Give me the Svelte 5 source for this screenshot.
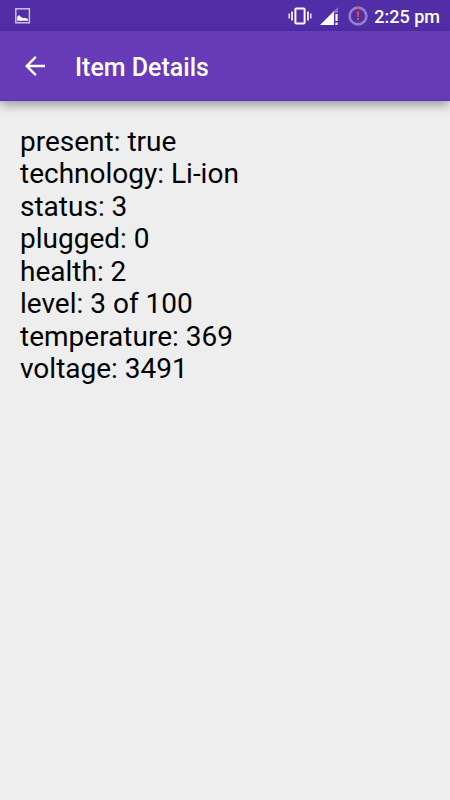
<script lang="ts">
  const battery = [
    { key: 'present', value: 'true' },
    { key: 'technology', value: 'Li-ion' },
    { key: 'status', value: '3' },
    { key: 'plugged', value: '0' },
    { key: 'health', value: '2' },
    { key: 'level', value: '3 of 100' },
    { key: 'temperature', value: '369' },
    { key: 'voltage', value: '3491' },
  ];
</script>

<div class="screen">
  <div class="status-bar">
    <svg class="photo" width="16" height="16" viewBox="0 0 16 16" aria-hidden="true">
      <rect x="0.8" y="0.8" width="13.6" height="14" fill="none" stroke="#d6cbee" stroke-width="1.4" />
      <path d="M2.2 12.8V9l1.2-1.6 1.4.2L6 9.2l1.4.2 1 .9 1.6-.6 1.2.8 1.8.3v2z" fill="#fff" />
    </svg>
    <div class="indicators">
      <svg width="24" height="18" viewBox="0 0 24 18" aria-hidden="true">
        <rect x="7.4" y="1.4" width="9.2" height="15.2" rx="1" fill="none" stroke="#fff" stroke-width="2" />
        <path d="M4 4.5v9M20 4.5v9" stroke="#e4dcf4" stroke-width="2" />
        <path d="M1.2 6.5v5M22.8 6.5v5" stroke="#d0c4ea" stroke-width="1.8" />
      </svg>
      <svg class="signal" width="19" height="18" viewBox="0 0 19 18" aria-hidden="true">
        <path d="M18 0v6h-4v-2z" fill="#8a70c5" />
        <path d="M0 18L14 4v14z" fill="#fff" />
        <path d="M15.4 7h2.2v7h-2.2zM15.4 15.5h2.2V18h-2.2z" fill="#fff" />
      </svg>
      <svg class="ring" width="20" height="20" viewBox="0 0 20 20" aria-hidden="true">
        <circle cx="10" cy="10" r="8.4" fill="none" stroke="#9580ca" stroke-width="2.6" />
        <path d="M9 0h2v3H9z" fill="#f4511e" />
        <path d="M8.9 5.6h2.2l-.3 5.4H9.2zM9 12h2v2H9z" fill="#f4511e" />
      </svg>
      <time>2:25 pm</time>
    </div>
  </div>

  <header>
    <button aria-label="Navigate up">
      <svg width="20" height="20" viewBox="0 0 20 20" aria-hidden="true">
        <path d="M20 8.8v2.4H4.7l7 7L10 20 0 10 10 0l1.7 1.8-7 7z" fill="#fff" />
      </svg>
    </button>
    <h1>Item Details</h1>
  </header>

  <main>
    {#each battery as item (item.key)}
      <p>{item.key}: {item.value}</p>
    {/each}
  </main>
</div>

<style>
  :global(body) {
    margin: 0;
    background: #eee;
  }
  .screen {
    min-height: 100vh;
    font-family: Roboto, sans-serif;
    background: #eee;
  }
  .status-bar {
    display: flex;
    align-items: center;
    justify-content: space-between;
    height: 31px;
    padding: 0 10px 0 15px;
    box-sizing: border-box;
    background: #512da8;
  }
  .indicators {
    display: flex;
    align-items: center;
  }
  .signal {
    margin-left: 8px;
  }
  .ring {
    margin-left: 9px;
  }
  time {
    margin-left: 6px;
    padding-top: 2px;
    font-size: 18px;
    font-weight: 500;
    line-height: 29px;
    color: #fff;
  }
  header {
    display: flex;
    align-items: center;
    height: 70px;
    padding-left: 15px;
    border-bottom: 1px solid #5e2fb6;
    box-sizing: border-box;
    background: #673ab7;
    box-shadow: 0 4px 10px rgba(0, 0, 0, 0.35);
  }
  button {
    display: flex;
    padding: 10px;
    border: 0;
    background: none;
    cursor: pointer;
  }
  h1 {
    margin: 0 0 0 20px;
    padding-top: 4px;
    font-size: 25px;
    font-weight: 500;
    line-height: 32px;
    color: #fff;
  }
  main {
    display: grid;
    grid-auto-rows: 32px 33px;
    padding: 24px 20px;
  }
  p {
    margin: 0;
    font-size: 28px;
    line-height: 33px;
    color: #000;
  }
</style>
